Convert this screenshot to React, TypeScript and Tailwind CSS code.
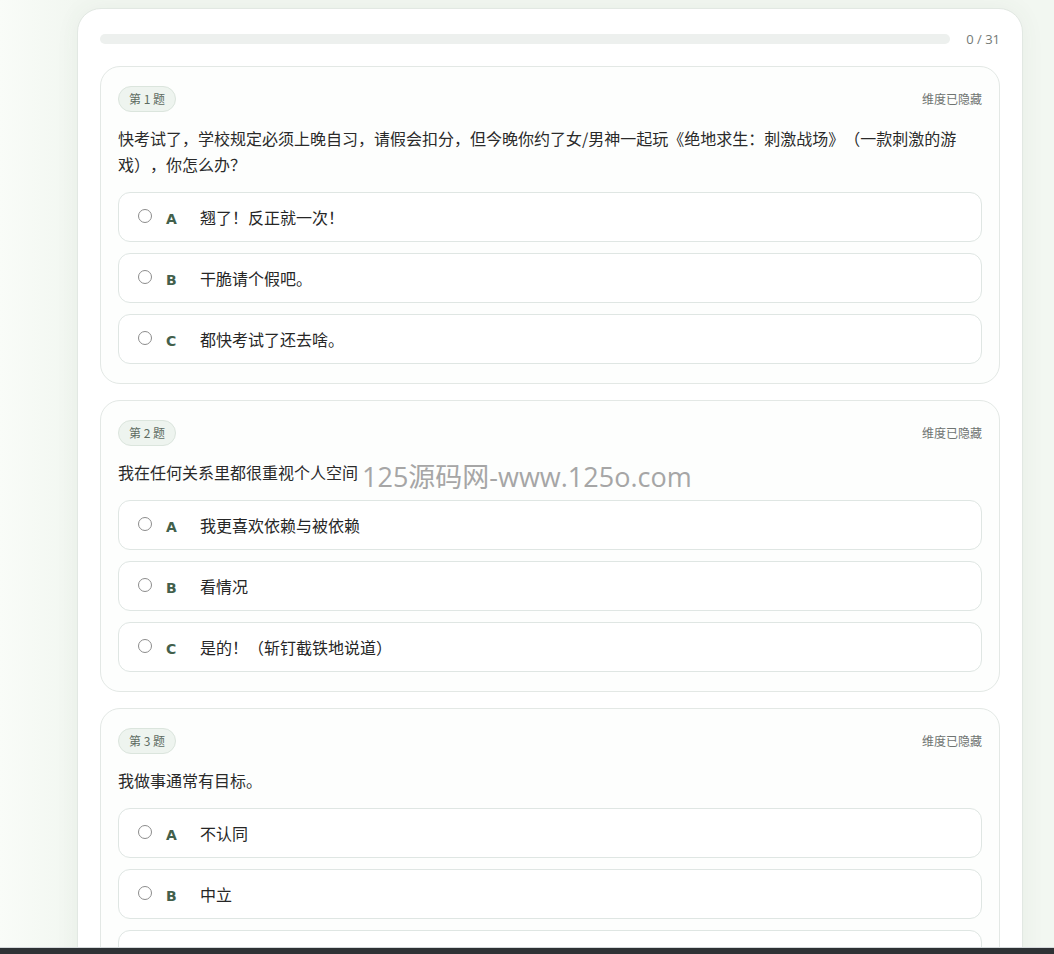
const questions = [
  {
    no: 1,
    text: "快考试了，学校规定必须上晚自习，请假会扣分，但今晚你约了女/男神一起玩《绝地求生：刺激战场》（一款刺激的游戏），你怎么办？",
    options: ["翘了！反正就一次！", "干脆请个假吧。", "都快考试了还去啥。"],
  },
  {
    no: 2,
    text: "我在任何关系里都很重视个人空间",
    options: ["我更喜欢依赖与被依赖", "看情况", "是的！（斩钉截铁地说道）"],
  },
  {
    no: 3,
    text: "我做事通常有目标。",
    options: ["不认同", "中立", "认同"],
  },
];

const letters = ["A", "B", "C"];

function Option({ letter, label }: { letter: string; label: string }) {
  return (
    <div className="h-[50px] rounded-xl border border-[#dfe6e3] bg-white flex items-center pl-[19px]">
      <span className="w-[14px] h-[14px] rounded-full border border-[#8c8c8c] bg-white -mt-[2px]" />
      <span className="ml-[14px] w-[34px] mt-[3px] text-[14px] leading-none font-bold text-[#43604c] font-['DejaVu_Sans',sans-serif]">
        {letter}
      </span>
      <span className="text-[16px] text-[#262626]">{label}</span>
    </div>
  );
}

function QuestionCard({ no, text, options }: { no: number; text: string; options: string[] }) {
  return (
    <div className="rounded-[20px] border border-[#e3e8e5] bg-[#fdfefd] px-[17px] pt-[19px] pb-[19px]">
      <div className="flex items-center justify-between h-[26px]">
        <span className="h-[26px] px-[10px] rounded-full border border-[#dbe5dd] bg-[#eef4ef] text-[12px] leading-none text-[#5d6b61] flex items-center">
          第 {no} 题
        </span>
        <span className="text-[12px] leading-none text-[#6f7471]">维度已隐藏</span>
      </div>
      <p className="mt-[13px] mb-[15px] text-[16px] leading-[26px] text-[#2a2a2a]">{text}</p>
      <div className="flex flex-col gap-[11px]">
        {options.map((o, i) => (
          <Option key={i} letter={letters[i]} label={o} />
        ))}
      </div>
    </div>
  );
}

export default function App() {
  return (
    <div className="relative min-h-screen bg-[linear-gradient(90deg,#f9fcf8_0%,#f2f7f1_7%,#f2f7f1_100%)] font-['Noto_Sans_CJK_SC',sans-serif] [text-spacing-trim:space-all] pt-2 pb-10">
      <div className="ml-[77px] w-[946px] rounded-[24px] border border-[#e2e8e3] bg-white px-[22px] pt-[25px] pb-6 shadow-[0_0_24px_rgba(60,90,60,0.06)]">
        <div className="flex items-center h-[10px]">
          <div className="flex-1 h-[10px] rounded-full bg-[#edf0ee]" />
          <span className="ml-[16px] text-[13px] leading-none text-[#747a76] font-['Open_Sans',sans-serif]">0 / 31</span>
        </div>
        <div className="mt-[22px] flex flex-col gap-[16px]">
          {questions.map((q) => (
            <QuestionCard key={q.no} no={q.no} text={q.text} options={q.options} />
          ))}
        </div>
      </div>

      <div className="pointer-events-none absolute left-[362px] top-[459px] text-[27px] leading-[36px] text-[#a6a6a6] font-['Open_Sans','Noto_Sans_CJK_SC',sans-serif]">
        125源码网-www.125o.com
      </div>

      <div className="fixed bottom-0 left-0 w-full h-[7px] border-t border-[#d5d9db] bg-[#2e3235]" />
    </div>
  );
}
